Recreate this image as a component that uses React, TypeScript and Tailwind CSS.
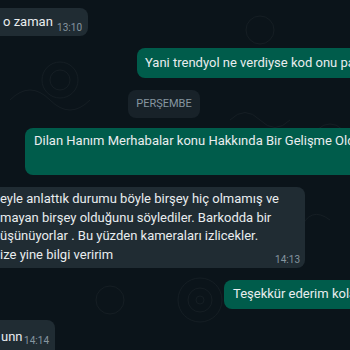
import React from "react";

function Time({ t }: { t: string }) {
  return <span className="block text-[10px] leading-[10px] text-[#8696a0] whitespace-nowrap">{t}</span>;
}

export default function App() {
  return (
    <div className="relative w-[350px] h-[350px] overflow-hidden bg-[#0b141a] text-[#e9edef] text-[13px] leading-[18.5px] font-[family-name:Roboto,sans-serif]">
      <svg className="absolute inset-0 w-full h-full opacity-[0.04]" viewBox="0 0 350 350">
        <g fill="none" stroke="#ffffff" strokeWidth="1">
          <circle cx="60" cy="80" r="18" />
          <circle cx="60" cy="80" r="10" />
          <circle cx="200" cy="300" r="22" />
          <circle cx="200" cy="300" r="12" />
          <circle cx="200" cy="300" r="4" />
          <circle cx="330" cy="140" r="16" />
          <circle cx="110" cy="300" r="14" />
          <circle cx="260" cy="30" r="14" />
          <circle cx="40" cy="150" r="12" />
          <path d="M10 100 q20 -20 40 0 t40 0" />
          <path d="M230 120 q15 -15 30 0 t30 0" />
          <path d="M300 230 q10 -25 30 -10" />
        </g>
      </svg>
      <div className="relative flex flex-col pt-[8px]">
        {/* 1 incoming */}
        <div className="flex">
          <div className="ml-[-10px] h-[28px] w-[98px] shrink-0 rounded-lg bg-[#202c33] flex items-start pl-[13px] pr-[6px] pt-[5px]">
            <span className="whitespace-nowrap">o zaman</span>
            <span className="ml-auto mt-[10px]"><Time t="13:10" /></span>
          </div>
        </div>
        {/* 2 outgoing */}
        <div className="flex mt-[12px]">
          <div className="ml-[137px] h-[30px] w-[260px] shrink-0 rounded-lg bg-[#005c4b] flex items-center pl-[8px] whitespace-nowrap">
            Yani trendyol ne verdiyse kod onu paylaştık
          </div>
        </div>
        {/* chip */}
        <div className="flex mt-[12px]">
          <div className="ml-[128px] h-[28px] w-[72px] shrink-0 rounded-lg bg-[#182229] flex items-center justify-center text-[11px] text-[#8696a0]">
            PERŞEMBE
          </div>
        </div>
        {/* 3 outgoing */}
        <div className="flex mt-[10px]">
          <div className="ml-[25px] h-[47px] w-[400px] shrink-0 rounded-lg bg-[#005c4b] pl-[9px] pt-[4px] whitespace-nowrap">
            Dilan Hanım Merhabalar konu Hakkında Bir Gelişme Oldu mu
          </div>
        </div>
        {/* 4 incoming */}
        <div className="flex mt-[12px]">
          <div className="relative ml-[-10px] w-[315px] h-[81px] shrink-0 rounded-lg bg-[#202c33] pl-[10px] pt-[3px] whitespace-nowrap">
            <div>eyle anlattık durumu böyle birşey hiç olmamış ve</div>
            <div>mayan birşey olduğunu söylediler. Barkodda bir</div>
            <div>üşünüyorlar . Bu yüzden kameraları izlicekler.</div>
            <div>ize yine bilgi veririm</div>
            <span className="absolute right-[5px] bottom-[3px]"><Time t="14:13" /></span>
          </div>
        </div>
        {/* 5 outgoing */}
        <div className="flex mt-[12px]">
          <div className="ml-[224px] h-[29px] w-[200px] shrink-0 rounded-lg bg-[#005c4b] flex items-center pl-[9px] whitespace-nowrap">
            Teşekkür ederim kolay gelsin
          </div>
        </div>
        {/* 6 incoming */}
        <div className="flex mt-[11px]">
          <div className="ml-[-10px] w-[65px] h-[40px] shrink-0 rounded-lg bg-[#202c33] pl-[11px] pr-[6px] pt-[8px] flex items-start whitespace-nowrap">
            <span>unn</span>
            <span className="ml-auto mt-[8px]"><Time t="14:14" /></span>
          </div>
        </div>
      </div>
    </div>
  );
}
